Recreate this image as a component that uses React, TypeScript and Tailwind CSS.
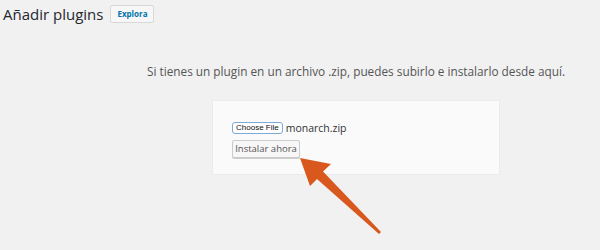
import React from 'react';

export default function App() {
  return (
    <div
      className="relative w-[600px] h-[250px] overflow-hidden bg-[#f1f1f1] text-[#444]"
      style={{ fontFamily: '"Open Sans", "Noto Sans", sans-serif' }}
    >
      {/* Header */}
      <div className="flex items-center gap-[7px] pl-[3px] pt-[5px] h-[23px]">
        <h1 className="text-[15px] leading-none text-[#23282d] font-normal">Añadir plugins</h1>
        <button className="h-[18px] px-[6px] text-[8px] font-bold text-[#0073aa] bg-[#f7f7f7] border border-[#d8d8d8] rounded-[2px] leading-none">
          Explora
        </button>
      </div>

      {/* Upload area */}
      <div className="flex flex-col items-center pl-[112px] pt-[43px]">
        <p className="text-[11.8px] leading-none text-[#555]">
          Si tienes un plugin en un archivo .zip, puedes subirlo e instalarlo desde aquí.
        </p>
        <div className="mt-[22px] w-[288px] h-[75px] bg-[#fafafa] border border-[#ebebeb] pl-[19px] pt-[21px]">
          <div className="flex items-center gap-[3px]">
            <button
              className="h-[12px] px-[3px] text-[8px] leading-none text-[#111] bg-white border border-[#7fa9d6] rounded-[3px]"
              style={{ fontFamily: '"Liberation Sans", Arial, sans-serif' }}
            >
              Choose File
            </button>
            <span className="text-[10.5px] leading-none text-[#333]">monarch.zip</span>
          </div>
          <button className="mt-[5px] h-[18px] w-[68px] text-[9.5px] leading-none text-[#555] bg-[#f7f7f7] border border-[#cccccc] rounded-[2px] shadow-[0_1px_0_#ccc]">
            Instalar ahora
          </button>
        </div>
      </div>

      {/* Arrow */}
      <svg className="absolute left-0 top-0" width="600" height="250" viewBox="0 0 600 250">
        <polygon
          points="300,158 331,164 323,171.5 381,232 379,234 317,179 310,186"
          fill="#d9581e"
        />
      </svg>
    </div>
  );
}
